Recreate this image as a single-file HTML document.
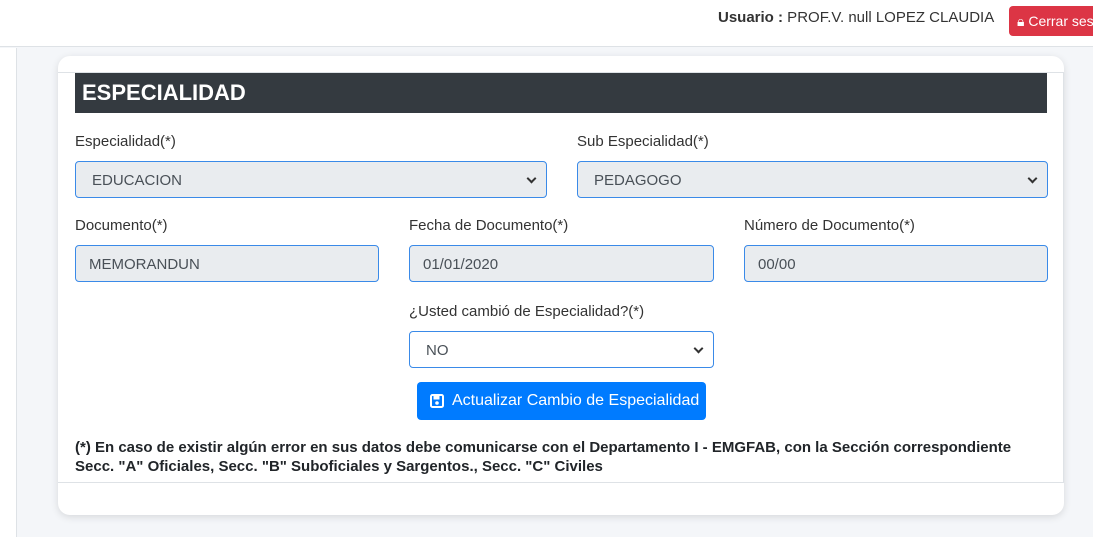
<!DOCTYPE html>
<html><head><meta charset="utf-8"><style>
*{box-sizing:border-box;margin:0;padding:0}
body{width:1093px;height:537px;overflow:hidden;background:#f4f6f9;font-family:"Liberation Sans",sans-serif;color:#212529;position:relative}
.top{position:absolute;left:0;top:0;width:1093px;height:47px;background:#fff;border-bottom:1px solid #dee2e6}
.user{position:absolute;left:718px;top:9px;font-size:15px;color:#333}
.btn-out{position:absolute;left:1009px;top:6px;width:100px;height:30px;background:#dc3545;border-radius:4px;color:#fff;font-size:14px;padding:7px 0 0 8px;white-space:nowrap}
.side{position:absolute;left:0;top:48px;width:17px;height:489px;background:#fff;border-right:1px solid #dee2e6}
.card{position:absolute;left:58px;top:56px;width:1006px;height:459px;background:#fff;border-radius:12px;box-shadow:0 2px 8px rgba(0,0,0,.12)}
.inner{position:absolute;left:0;top:16px;width:1006px;height:411px;border-top:1px solid #dee2e6;border-bottom:1px solid #dee2e6;border-right:1px solid #dee2e6}
.hd{position:absolute;left:17px;top:0px;width:972px;height:40px;background:#343a40;color:#fff;font-weight:bold;font-size:22px;padding:7px 0 0 7px}
.lbl{position:absolute;font-size:15px;color:#333}
.in{position:absolute;height:37px;border:1px solid #3a8ae8;border-radius:4px;background:#e9ecef;font-size:15px;color:#495057;padding:10px 0 0 16px}
.in.w{background:#fff}
.in.sel::after{content:"";position:absolute;right:11px;top:13px;width:5px;height:5px;border-right:2px solid #333;border-bottom:2px solid #333;transform:rotate(45deg)}
.btn{position:absolute;left:359px;top:326px;width:289px;height:38px;background:#007bff;border-radius:4px;color:#fff;font-size:16px;padding:10px 0 0 35px;white-space:nowrap}
.note{position:absolute;left:17px;top:382px;font-size:15px;font-weight:bold;line-height:19px;color:#212529;white-space:nowrap}
</style></head><body>
<div class="top"><div class="user"><b>Usuario :</b> PROF.V. null LOPEZ CLAUDIA</div><div class="btn-out">&#128274;&#xFE0E; Cerrar sesión</div></div>
<div class="side"></div>
<div class="card"><div class="inner">
<div class="hd">ESPECIALIDAD</div>
</div>
<div class="lbl" style="left:17px;top:77px">Especialidad(*)</div>
<div class="in sel" style="left:17px;top:105px;width:472px">EDUCACION</div>
<div class="lbl" style="left:519px;top:77px">Sub Especialidad(*)</div>
<div class="in sel" style="left:519px;top:105px;width:471px">PEDAGOGO</div>
<div class="lbl" style="left:17px;top:161px">Documento(*)</div>
<div class="in" style="left:17px;top:189px;width:304px;padding-left:13px">MEMORANDUN</div>
<div class="lbl" style="left:351px;top:161px">Fecha de Documento(*)</div>
<div class="in" style="left:351px;top:189px;width:305px;padding-left:13px">01/01/2020</div>
<div class="lbl" style="left:686px;top:161px">Número de Documento(*)</div>
<div class="in" style="left:686px;top:189px;width:304px;padding-left:13px">00/00</div>
<div class="lbl" style="left:351px;top:247px">¿Usted cambió de Especialidad?(*)</div>
<div class="in w sel" style="left:351px;top:275px;width:305px">NO</div>
<div class="btn"><svg style="position:absolute;left:13px;top:12px" width="14" height="14" viewBox="0 0 14 14"><rect x="1" y="1" width="12" height="12" rx="1.5" fill="none" stroke="#fff" stroke-width="2"/><rect x="3.5" y="2" width="6" height="3.5" fill="#fff"/><circle cx="7" cy="9" r="1.8" fill="#fff"/></svg>Actualizar Cambio de Especialidad</div>
<div class="note">(*) En caso de existir algún error en sus datos debe comunicarse con el Departamento I - EMGFAB, con la Sección correspondiente<br>Secc. "A" Oficiales, Secc. "B" Suboficiales y Sargentos., Secc. "C" Civiles</div>
</div>
</body></html>
